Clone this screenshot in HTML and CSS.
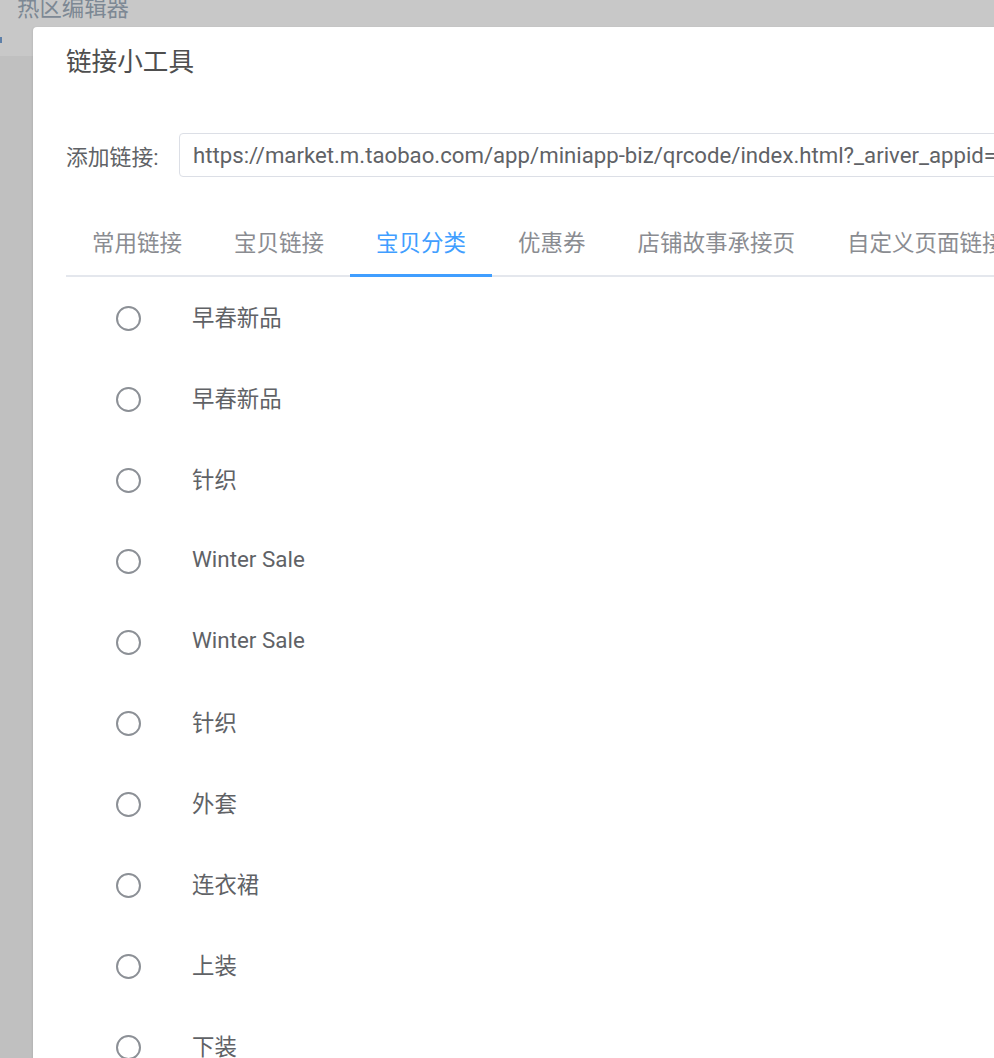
FILE: index.html
```html
<!DOCTYPE html>
<html lang="zh-CN">
<head>
    <meta charset="UTF-8">
    <meta name="viewport" content="width=device-width, initial-scale=1.0">
    <link rel="stylesheet" href="styles.css">
    <title>热区编辑器</title>
</head>
<body>
    <div class="page">
        <div class="page-header">
            <span class="page-mark"></span>
            <span class="page-title">热区编辑器</span>
        </div>
        <div class="page-body"></div>
    </div>

    <div class="dialog">
        <h2 class="dialog-title">链接小工具</h2>

        <div class="link-row">
            <label class="link-label" for="link">添加链接:</label>
            <input class="link-input" id="link" type="text" readonly
                value="https://market.m.taobao.com/app/miniapp-biz/qrcode/index.html?_ariver_appid=3000000002087412&amp;page=pages/category">
        </div>

        <div class="tabs">
            <div class="tab">常用链接</div>
            <div class="tab">宝贝链接</div>
            <div class="tab active">宝贝分类</div>
            <div class="tab">优惠券</div>
            <div class="tab">店铺故事承接页</div>
            <div class="tab">自定义页面链接</div>
        </div>

        <ul class="cat-list">
            <li class="cat-item"><span class="radio"></span><span class="cat-name">早春新品</span></li>
            <li class="cat-item"><span class="radio"></span><span class="cat-name">早春新品</span></li>
            <li class="cat-item"><span class="radio"></span><span class="cat-name">针织</span></li>
            <li class="cat-item"><span class="radio"></span><span class="cat-name">Winter Sale</span></li>
            <li class="cat-item"><span class="radio"></span><span class="cat-name">Winter Sale</span></li>
            <li class="cat-item"><span class="radio"></span><span class="cat-name">针织</span></li>
            <li class="cat-item"><span class="radio"></span><span class="cat-name">外套</span></li>
            <li class="cat-item"><span class="radio"></span><span class="cat-name">连衣裙</span></li>
            <li class="cat-item"><span class="radio"></span><span class="cat-name">上装</span></li>
            <li class="cat-item"><span class="radio"></span><span class="cat-name">下装</span></li>
        </ul>
    </div>
</body>
</html>
```

FILE: styles.css
```css
html, body {
    margin: 0;
    padding: 0;
    height: 100%;
    overflow: hidden;
}

body {
    font-family: Roboto, "Noto Sans CJK SC", sans-serif;
    background: #c0c0c0;
    color: #606266;
    position: relative;
}

.page {
    display: flex;
    flex-direction: column;
    height: 100%;
}

.page-header {
    height: 56px;
    background: #c8c8c8;
    position: relative;
    flex-shrink: 0;
}

.page-title {
    position: absolute;
    left: 17px;
    top: -7px;
    font-size: 22.4px;
    line-height: 30px;
    color: #7d8894;
}

.page-mark {
    position: absolute;
    left: 0;
    top: 37px;
    width: 2px;
    height: 6px;
    background: #5d7fa8;
}

.page-body {
    flex: 1;
    background: #c0c0c0;
}

.dialog {
    position: absolute;
    left: 33px;
    top: 27px;
    width: 1100px;
    height: 1200px;
    background: #fff;
    border-radius: 4px 0 0 0;
    padding: 17px 0 0 33px;
    box-sizing: border-box;
    box-shadow: -1px 0 2px rgba(0, 0, 0, 0.06);
}

.dialog-title {
    margin: 0;
    font-size: 25.6px;
    line-height: 36px;
    font-weight: normal;
    color: #4e4e4e;
}

.link-row {
    display: flex;
    align-items: center;
    margin-top: 53px;
}

.link-label {
    width: 113px;
    flex-shrink: 0;
    font-size: 21.8px;
    color: #606266;
}

.link-input {
    width: 960px;
    height: 44px;
    box-sizing: border-box;
    padding: 0 13px;
    border: 1.5px solid #dcdfe6;
    border-radius: 4px;
    font-family: Roboto, "Noto Sans CJK SC", sans-serif;
    font-size: 22.2px;
    color: #606266;
    background: #fff;
    outline: none;
}

.tabs {
    display: flex;
    margin-top: 34px;
    border-bottom: 2px solid #e4e7ed;
    width: 1000px;
}

.tab {
    height: 64px;
    line-height: 64px;
    padding: 0 26px;
    font-size: 22.5px;
    color: #8a8c91;
    white-space: nowrap;
    position: relative;
}

.tab.active {
    color: #409eff;
}

.tab.active::after {
    content: "";
    position: absolute;
    left: 0;
    right: 0;
    bottom: -2px;
    height: 3px;
    background: #409eff;
}

.cat-list {
    list-style: none;
    margin: 0;
    padding: 1px 0 0 0;
}

.cat-item {
    display: flex;
    align-items: center;
    height: 81px;
    padding-left: 50px;
}

.radio {
    width: 25px;
    height: 25px;
    box-sizing: border-box;
    border: 2px solid #8c9096;
    border-radius: 50%;
    flex-shrink: 0;
}

.cat-name {
    margin-left: 51px;
    padding-bottom: 5px;
    font-size: 22.4px;
    color: #606266;
}
```
